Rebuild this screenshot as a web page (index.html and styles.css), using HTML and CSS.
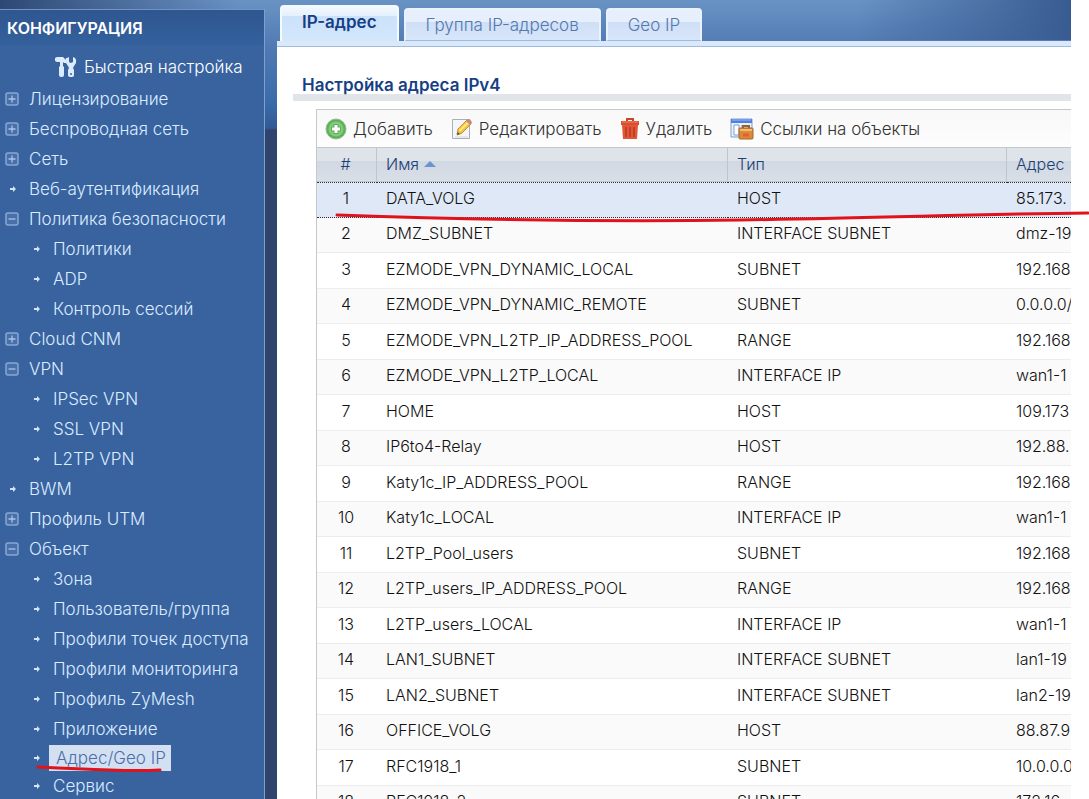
FILE: index.html
```html
<!DOCTYPE html>
<html lang="ru">
<head>
  <meta charset="UTF-8">
  <meta name="viewport" content="width=device-width, initial-scale=1.0">
  <title>Конфигурация - IP-адрес</title>
  <link rel="stylesheet" href="styles.css">
</head>
<body>

  <!-- Shared icons -->
  <svg class="sprite" aria-hidden="true">
    <symbol id="plus" viewBox="0 0 14 14">
      <rect x="1" y="1" width="12" height="12" rx="2" fill="#4a70a9" stroke="#86a8d6" stroke-width="1.5"/>
      <path d="M3.5 7h7M7 3.5v7" stroke="#a9c4ea" stroke-width="1.3"/>
    </symbol>
    <symbol id="minus" viewBox="0 0 14 14">
      <rect x="1" y="1" width="12" height="12" rx="2" fill="#4a70a9" stroke="#86a8d6" stroke-width="1.5"/>
      <path d="M3.5 7h7" stroke="#a9c4ea" stroke-width="1.3"/>
    </symbol>
    <symbol id="dot" viewBox="0 0 14 14">
      <path d="M5 6h3V4l3 3-3 3V8H5z" fill="#d3e5fb"/>
    </symbol>
  </svg>

  <div class="app">
    <nav class="sidebar">
      <h1>КОНФИГУРАЦИЯ</h1>
      <a class="quick" href="#">
        <svg width="22" height="22" viewBox="0 0 22 22" fill="#dcebff">
          <path d="M0 2l2-1h6l3 3v3H9L8 6v4l1 1v8q0 2-2 2H6q-2 0-2-2v-8l1-1V6H2L0 5z"/>
          <path d="M12 2l2-1v5l2 1 2-1V1l2 1q2 2 1 5l-2 3-1 2 1 2v5q0 2-3 2t-3-2v-5l1-2-1-2-2-3q-1-3 0-5z"/>
          <circle cx="16" cy="18" r="1" fill="#3963a0"/>
        </svg>
        Быстрая настройка
      </a>
      <ul class="menu">
        <li><a href="#"><svg><use href="#plus"/></svg>Лицензирование</a></li>
        <li><a href="#"><svg><use href="#plus"/></svg>Беспроводная сеть</a></li>
        <li><a href="#"><svg><use href="#plus"/></svg>Сеть</a></li>
        <li><a href="#"><svg><use href="#dot"/></svg>Веб-аутентификация</a></li>
        <li><a href="#"><svg><use href="#minus"/></svg>Политика безопасности</a>
          <ul>
            <li><a href="#"><svg><use href="#dot"/></svg>Политики</a></li>
            <li><a href="#"><svg><use href="#dot"/></svg>ADP</a></li>
            <li><a href="#"><svg><use href="#dot"/></svg>Контроль сессий</a></li>
          </ul>
        </li>
        <li><a href="#"><svg><use href="#plus"/></svg>Cloud CNM</a></li>
        <li><a href="#"><svg><use href="#minus"/></svg>VPN</a>
          <ul>
            <li><a href="#"><svg><use href="#dot"/></svg>IPSec VPN</a></li>
            <li><a href="#"><svg><use href="#dot"/></svg>SSL VPN</a></li>
            <li><a href="#"><svg><use href="#dot"/></svg>L2TP VPN</a></li>
          </ul>
        </li>
        <li><a href="#"><svg><use href="#dot"/></svg>BWM</a></li>
        <li><a href="#"><svg><use href="#plus"/></svg>Профиль UTM</a></li>
        <li><a href="#"><svg><use href="#minus"/></svg>Объект</a>
          <ul>
            <li><a href="#"><svg><use href="#dot"/></svg>Зона</a></li>
            <li><a href="#"><svg><use href="#dot"/></svg>Пользователь/группа</a></li>
            <li><a href="#"><svg><use href="#dot"/></svg>Профили точек доступа</a></li>
            <li><a href="#"><svg><use href="#dot"/></svg>Профили мониторинга</a></li>
            <li><a href="#"><svg><use href="#dot"/></svg>Профиль ZyMesh</a></li>
            <li><a href="#"><svg><use href="#dot"/></svg>Приложение</a></li>
            <li class="active"><a href="#"><svg><use href="#dot"/></svg><span>Адрес/Geo IP</span></a></li>
            <li class="after-active"><a href="#"><svg><use href="#dot"/></svg>Сервис</a></li>
          </ul>
        </li>
      </ul>
    </nav>

    <main class="main">
      <div class="tabs">
        <button class="tab selected">IP-адрес</button>
        <button class="tab">Группа IP-адресов</button>
        <button class="tab">Geo IP</button>
      </div>

      <div class="panel">
        <h2>Настройка адреса IPv4</h2>
        <div class="grid">
          <!-- Toolbar -->
          <div class="toolbar">
            <button>
              <svg width="22" height="22" viewBox="0 0 22 22">
                <circle cx="11" cy="11" r="10" fill="#5fae5c" stroke="#8ac485"/>
                <circle cx="11" cy="11" r="7.5" fill="#85cb7c"/>
                <path d="M11 6v10M6 11h10" stroke="#5fae5c" stroke-width="5"/>
                <path d="M11 7v8M7 11h8" stroke="#fff" stroke-width="3"/>
              </svg>
              Добавить
            </button>
            <button>
              <svg width="22" height="22" viewBox="0 0 22 22">
                <path d="M1.500 1.500h17v19h-17z" fill="#f4f6f9" stroke="#a9afb8"/>
                <path d="M4 19h13" stroke="#d5d9df"/>
                <path d="M6 17l1-6 9-9 4 4-9 9z" fill="#f5c33b" stroke="#c98f2a"/>
                <path d="M8.500 13l9-9" stroke="#ffe98a" stroke-width="2"/>
                <path d="M15 3l2-2q3 0 4 4l-2 2z" fill="#c98787"/>
                <path d="M6 17l.6-3 2.400 2z" fill="#555"/>
              </svg>
              Редактировать
            </button>
            <button>
              <svg width="20" height="22" viewBox="0 0 20 22">
                <path d="M7 3V1h6v2" fill="none" stroke="#c4442c" stroke-width="2"/>
                <path d="M1 3h18v4H1z" fill="#d9502f"/>
                <path d="M2 4h16" stroke="#ef8460"/>
                <path d="M2 7h16l-1 14H3z" fill="#e25536"/>
                <path d="M6 9v10M10 9v10M14 9v10" stroke="#b53921" stroke-width="1.500"/>
              </svg>
              Удалить
            </button>
            <button>
              <svg width="24" height="22" viewBox="0 0 24 22">
                <path d="M1 1h21v18H1z" fill="#e8f0fa" stroke="#7f9fd0"/>
                <path d="M1 1h21v4H1z" fill="#4f80dd"/>
                <path d="M2 2h19" stroke="#9dbcf4"/>
                <path d="M4 7h5v10H4z" fill="#fff" stroke="#7f9fd0"/>
                <path d="M11 8h8" stroke="#7f9fd0"/>
                <path d="M13 11V8h6v3" fill="none" stroke="#9a622d" stroke-width="2"/>
                <rect x="9" y="10" width="14" height="11" rx="1" fill="#d98a3c" stroke="#a5672b"/>
                <path d="M10 12h12" stroke="#f4bd72" stroke-width="2"/>
                <path d="M13 17h6" stroke="#ed5c2c" stroke-width="3"/>
              </svg>
              Ссылки на объекты
            </button>
          </div>

          <!-- Address objects -->
          <table>
            <thead>
              <tr>
                <th class="num">#</th>
                <th class="name">Имя <svg class="sort" width="12" height="6" viewBox="0 0 12 6"><path d="M0 6l6-6 6 6z" fill="#6c93cf"/></svg></th>
                <th class="type">Тип</th>
                <th>Адрес</th>
              </tr>
            </thead>
            <tbody>
              <tr class="selected"><td>1</td><td>DATA_VOLG</td><td>HOST</td><td>85.173.</td></tr>
              <tr><td>2</td><td>DMZ_SUBNET</td><td>INTERFACE SUBNET</td><td>dmz-19</td></tr>
              <tr><td>3</td><td>EZMODE_VPN_DYNAMIC_LOCAL</td><td>SUBNET</td><td>192.168</td></tr>
              <tr><td>4</td><td>EZMODE_VPN_DYNAMIC_REMOTE</td><td>SUBNET</td><td>0.0.0.0/</td></tr>
              <tr><td>5</td><td>EZMODE_VPN_L2TP_IP_ADDRESS_POOL</td><td>RANGE</td><td>192.168</td></tr>
              <tr><td>6</td><td>EZMODE_VPN_L2TP_LOCAL</td><td>INTERFACE IP</td><td>wan1-1</td></tr>
              <tr><td>7</td><td>HOME</td><td>HOST</td><td>109.173</td></tr>
              <tr><td>8</td><td>IP6to4-Relay</td><td>HOST</td><td>192.88.</td></tr>
              <tr><td>9</td><td>Katy1c_IP_ADDRESS_POOL</td><td>RANGE</td><td>192.168</td></tr>
              <tr><td>10</td><td>Katy1c_LOCAL</td><td>INTERFACE IP</td><td>wan1-1</td></tr>
              <tr><td>11</td><td>L2TP_Pool_users</td><td>SUBNET</td><td>192.168</td></tr>
              <tr><td>12</td><td>L2TP_users_IP_ADDRESS_POOL</td><td>RANGE</td><td>192.168</td></tr>
              <tr><td>13</td><td>L2TP_users_LOCAL</td><td>INTERFACE IP</td><td>wan1-1</td></tr>
              <tr><td>14</td><td>LAN1_SUBNET</td><td>INTERFACE SUBNET</td><td>lan1-19</td></tr>
              <tr><td>15</td><td>LAN2_SUBNET</td><td>INTERFACE SUBNET</td><td>lan2-19</td></tr>
              <tr><td>16</td><td>OFFICE_VOLG</td><td>HOST</td><td>88.87.9</td></tr>
              <tr><td>17</td><td>RFC1918_1</td><td>SUBNET</td><td>10.0.0.0</td></tr>
              <tr><td>18</td><td>RFC1918_2</td><td>SUBNET</td><td>172.16.</td></tr>
            </tbody>
          </table>
        </div>
      </div>
    </main>
  </div>

  <!-- Red marker strokes over the page -->
  <svg class="marks" width="1089" height="799" aria-hidden="true">
    <path d="M337 215C480 220 600 222 740 220S980 214 1088 213"/>
    <path d="M38 767Q80 769 110 770T160 770"/>
  </svg>

</body>
</html>
```
FILE: styles.css
```css
* {
  box-sizing: border-box;
}
body {
  margin: 0;
  height: 100vh;
  overflow: hidden;
  position: relative;
  background: #fff;
  font-family: Inter, sans-serif;
  font-size: 17px;
  font-weight: 300;
}
a {
  color: inherit;
  text-decoration: none;
}
button {
  font: inherit;
  cursor: pointer;
}
.sprite {
  display: none;
}
.app {
  display: flex;
  gap: 12px;
  height: 100%;
  margin-right: 18px;
  background:
    linear-gradient(90deg, #2e4875, rgba(46, 72, 117, 0) 240px) 0 0 / 100% 40px no-repeat,
    linear-gradient(90deg, rgba(56, 92, 146, 0) 80%, #385c92) 0 0 / 100% 40px no-repeat,
    linear-gradient(#6a93c4, #5079b3 48px, #3a6cab 100px, #315a97 128px, #30436d 130px);
}

/* Sidebar */
.sidebar {
  width: 265px;
  flex-shrink: 0;
  margin-top: 9px;
  border-top: 1px solid #7194c8;
  border-right: 1px solid #7f9fd0;
  background: linear-gradient(#2f568f, #33609c 34px, #38639f 36px);
  color: #dcebff;
  overflow: hidden;
  white-space: nowrap;
}
.sidebar h1 {
  margin: 0;
  padding-left: 7px;
  color: #fff;
  font-size: 16px;
  font-weight: 600;
  line-height: 36px;
}
.quick {
  display: flex;
  align-items: center;
  gap: 7px;
  height: 30px;
  margin: 6px 0 2px 55px;
  color: #fff;
}
.menu,
.menu ul {
  margin: 0;
  padding: 0;
  list-style: none;
}
.menu a {
  display: flex;
  align-items: center;
  gap: 10px;
  height: 30px;
  padding-left: 5px;
}
.menu svg {
  width: 14px;
  height: 14px;
  flex-shrink: 0;
}
.menu ul a {
  padding-left: 29px;
}
.menu .active a,
.menu .after-active a {
  height: 28px;
}
.menu .active a {
  gap: 6px;
}
.active span {
  padding: 0 5px 0 7px;
  background: #d3e0f2;
  color: #4a6fa8;
  line-height: 26px;
}

/* Tabs */
.main {
  flex: 1;
  min-width: 0;
  display: flex;
  flex-direction: column;
}
.tabs {
  display: flex;
  align-items: flex-end;
  gap: 5px;
  height: 41px;
  padding-left: 3px;
}
.tab {
  height: 33px;
  padding: 0 20px;
  border: 2px solid #e9f2fd;
  border-bottom: 1px solid #9bbce0;
  border-radius: 4px 4px 0 0;
  background: linear-gradient(#e6effb 40%, #cfdff6 41%, #d8e6fa);
  color: #5478ae;
}
.tab.selected {
  height: 36px;
  padding-bottom: 5px;
  border-color: #f5faff;
  border-bottom: 0;
  background: linear-gradient(#f2f8fe, #e3f0fd 26%, #cbe2fa 27%, #d3e7fc);
  color: #173f85;
  font-weight: 600;
}

/* Content */
.panel {
  flex: 1;
  min-height: 0;
  padding: 31px 0 0 16px;
  border-top: 5px solid #dae8fa;
  background: #fff;
  box-shadow: inset 0 1px #9bbce0;
  overflow: hidden;
}
.panel h2 {
  margin: 0 0 8px;
  padding-left: 9px;
  border-bottom: 7px solid #e1e5ea;
  color: #173f85;
  font-size: 17px;
  font-weight: 600;
  line-height: 17px;
}
.grid {
  margin-left: 23px;
  border-top: 1px solid #c5c8cb;
  border-left: 1px solid #c5c8cb;
}
.toolbar {
  display: flex;
  gap: 18px;
  height: 37px;
  padding-left: 8px;
  background: linear-gradient(#f8f8f8, #fdfdfd);
}
.toolbar button {
  display: flex;
  align-items: center;
  gap: 6px;
  padding: 0;
  border: 0;
  background: none;
  color: #333;
  white-space: nowrap;
}
table {
  width: 100%;
  table-layout: fixed;
  border-collapse: separate;
  border-spacing: 0;
  font-size: 16px;
}
th {
  height: 35px;
  padding: 0 9px 2px;
  border-top: 1px solid #c5c8cb;
  border-bottom: 1px solid #c5c8cb;
  border-right: 1px solid #bfc5cd;
  background: linear-gradient(#dfe4ea 38%, #d0d8e3 39%, #d9dfe8);
  color: #1c3f73;
  font-weight: 300;
  text-align: left;
}
th:last-child {
  border-right: 0;
}
th.num {
  width: 60px;
}
th.name {
  width: 351px;
}
th.type {
  width: 279px;
}
.sort {
  vertical-align: 3px;
}
td {
  height: 36px;
  padding: 0 9px 4px;
  border-bottom: 1px solid #ededed;
  color: #111;
  white-space: nowrap;
  overflow: hidden;
}
th:first-child,
td:first-child {
  padding-right: 11px;
  text-align: center;
}
tr:nth-child(even) td {
  height: 35px;
  background: #fafafa;
}
tr.selected td {
  border-top: 1px dotted #333;
  border-bottom: 1px dotted #333;
  background: #dfe8f6;
}

.marks {
  position: absolute;
  top: 0;
  left: 0;
  fill: none;
  stroke: #e0121b;
  stroke-width: 3;
  stroke-linecap: round;
  pointer-events: none;
}
```
